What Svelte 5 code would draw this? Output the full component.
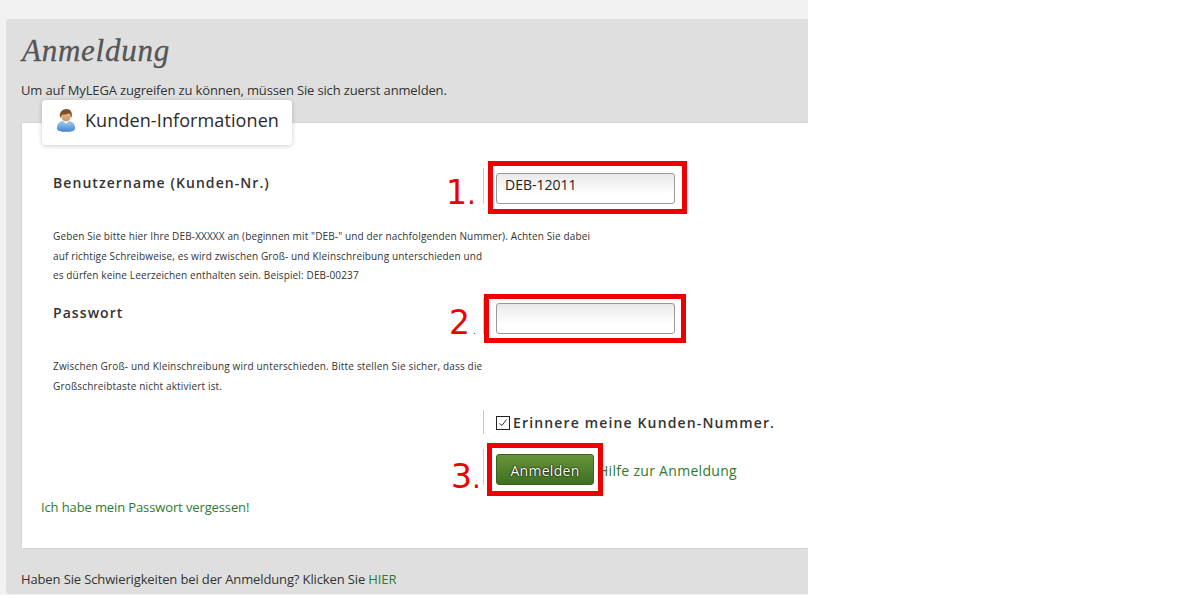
<script>
  // Overlay marks drawn on the screenshot: red frames and step numbers
  const marks = [
    { n: '1', dot: '.', cls: 'one' },
    { n: '2', dot: '.', cls: 'two' },
    { n: '3', dot: '.', cls: 'three' },
  ];
</script>

<div class="page">
  <section class="panel">
    <h1>Anmeldung</h1>
    <p class="intro">Um auf MyLEGA zugreifen zu können, müssen Sie sich zuerst anmelden.</p>

    <div class="card">
      <div class="legend">
        <svg width="20" height="24" viewBox="0 0 22 26">
          <defs>
            <linearGradient id="shirt" x1="0" y1="0" x2="0" y2="1">
              <stop offset="0" stop-color="#a9d0f2" />
              <stop offset="1" stop-color="#3f86cf" />
            </linearGradient>
            <linearGradient id="skin" x1="0" y1="0" x2="0" y2="1">
              <stop offset="0" stop-color="#eec39a" />
              <stop offset="1" stop-color="#cf9565" />
            </linearGradient>
          </defs>
          <path d="M1 22c0-5 3-7.500 7-8.500h6c4 1 7 3.500 7 8.500 0 2.500-3 4-10 4S1 24.500 1 22z" fill="url(#shirt)" />
          <path d="M7.500 14l3.500 3.500 3.500-3.500-1-2.500h-5z" fill="#f2f6fa" />
          <ellipse cx="11" cy="8" rx="5.500" ry="6.500" fill="url(#skin)" />
          <path d="M4.500 11C3 4 7.500 1 11.500 1 16 1 18.500 4.500 17 11c-.5-3-1.500-5-3-5.500C12 7 8 7 7 7 6 8 5 9.500 4.500 11z" fill="#7d4f26" />
        </svg>
        <span>Kunden-Informationen</span>
      </div>

      <div class="row first">
        <label for="user">Benutzername (Kunden-Nr.)</label>
        <div class="field"><input id="user" type="text" value="DEB-12011" /></div>
      </div>
      <p class="help first-help">
        Geben Sie bitte hier Ihre DEB-XXXXX an (beginnen mit "DEB-" und der nachfolgenden Nummer). Achten Sie dabei<br />
        auf richtige Schreibweise, es wird zwischen Groß- und Kleinschreibung unterschieden und<br />
        es dürfen keine Leerzeichen enthalten sein. Beispiel: DEB-00237
      </p>

      <div class="row">
        <label for="pass">Passwort</label>
        <div class="field"><input id="pass" type="password" /></div>
      </div>
      <p class="help second-help">
        Zwischen Groß- und Kleinschreibung wird unterschieden. Bitte stellen Sie sicher, dass die<br />
        Großschreibtaste nicht aktiviert ist.
      </p>

      <div class="row check-row">
        <div class="field check">
          <span class="box">
            <svg width="14" height="14" viewBox="0 0 14 14">
              <rect x=".5" y=".5" width="13" height="13" fill="#fff" stroke="#222" />
              <path d="M3.500 7.500 6 9.500 10.500 3.500" fill="none" stroke="#333" stroke-width="1" />
            </svg>
          </span>
          <span class="remember">Erinnere meine Kunden-Nummer.</span>
        </div>
      </div>

      <div class="row submit-row">
        <div class="field submit">
          <button type="button">Anmelden</button>
          <a href="#hilfe" class="help-link">Hilfe zur Anmeldung</a>
        </div>
      </div>

      <a href="#vergessen" class="forgot">Ich habe mein Passwort vergessen!</a>

      {#each marks as m}
        <span class="num {m.cls}">{m.n}<span class="dot">{m.dot}</span></span>
        <span class="frame {m.cls}"></span>
      {/each}
    </div>

    <p class="trouble">Haben Sie Schwierigkeiten bei der Anmeldung? Klicken Sie <a href="#hier">HIER</a></p>
  </section>
</div>

<style>
  :global(body) {
    margin: 0;
    background: #fff;
  }
  .page {
    width: 802px;
    height: 576px;
    padding: 19px 0 0 6px;
    background: #f2f2f2;
    overflow: hidden;
    font-family: "Open Sans", sans-serif;
    color: #333;
  }
  .panel {
    height: 575px;
    background: #dfdfdf;
    border-radius: 4px 0 0 4px;
    overflow: hidden;
  }
  h1 {
    margin: 0;
    padding: 12px 0 0 16px;
    font-family: "Liberation Serif", serif;
    font-style: italic;
    font-weight: 400;
    font-size: 31px;
    line-height: 40px;
    letter-spacing: 0.75px;
    color: #555;
    -webkit-text-stroke: 0.3px #555;
  }
  .intro {
    margin: 10px 0 0 15px;
    font-size: 13px;
    line-height: 18px;
    letter-spacing: -0.15px;
  }
  .card {
    position: relative;
    height: 425px;
    margin: 24px 0 0 16px;
    background: #fff;
    box-shadow: 0 0 2px rgba(0, 0, 0, 0.12);
  }
  .legend {
    position: absolute;
    left: 20px;
    top: -23px;
    width: 250px;
    height: 45px;
    box-sizing: border-box;
    padding: 0 0 6px 14px;
    display: flex;
    align-items: center;
    gap: 9px;
    background: #fff;
    border-radius: 4px;
    box-shadow: 0 1px 5px rgba(0, 0, 0, 0.2);
    font-size: 18px;
    letter-spacing: 0.1px;
    color: #2b2b2b;
  }
  .row {
    display: flex;
    padding-left: 31px;
  }
  .row.first {
    padding-top: 45px;
  }
  .row label {
    width: 430px;
    font-size: 14px;
    font-weight: 600;
    line-height: 32px;
    letter-spacing: 1.07px;
    color: #333;
    margin-top: -1px;
    height: 32px;
  }
  .field {
    border-left: 1px solid #ccc;
    padding: 5px 0 0 12px;
    height: 31px;
  }
  input {
    display: block;
    box-sizing: border-box;
    width: 179px;
    height: 31px;
    margin: 0;
    padding: 0 8px 8px;
    border: 1px solid #999;
    border-radius: 3px;
    background: linear-gradient(#e9e9e9, #fff 70%);
    font-family: "Open Sans", sans-serif;
    font-size: 14px;
    color: #222;
  }
  .help {
    margin: 0;
    padding-left: 31px;
    font-size: 10px;
    line-height: 19.5px;
    letter-spacing: 0.13px;
    color: #333;
    white-space: nowrap;
  }
  .first-help {
    margin-top: 23px;
    margin-bottom: 12.5px;
  }
  .row + .second-help {
    margin-top: 23px;
    letter-spacing: 0.17px;
  }
  .check-row {
    margin-top: 14px;
    padding-left: 461px;
  }
  .check {
    display: flex;
    align-items: center;
    height: 24px;
    padding: 0 0 0 12px;
  }
  .box {
    display: block;
    height: 14px;
    margin: 0 3px 5px 0;
  }
  .remember {
    font-size: 14px;
    font-weight: 600;
    letter-spacing: 1.15px;
    white-space: nowrap;
  }
  .submit-row {
    margin-top: 15px;
    padding-left: 461px;
  }
  .submit {
    display: flex;
    align-items: flex-start;
  }
  button {
    width: 98px;
    height: 31px;
    padding: 2px 0 0;
    border: 1px solid #3c5f25;
    border-radius: 3px;
    background: linear-gradient(#669437, #3f7022);
    color: #fff;
    font-family: "Open Sans", sans-serif;
    font-size: 14px;
    letter-spacing: 0.3px;
    text-shadow: 0 0 2px #000, 0 0 1px #000;
  }
  .help-link {
    margin-left: 4px;
    line-height: 33px;
    font-size: 14px;
    letter-spacing: 0.3px;
    white-space: nowrap;
  }
  a {
    color: #2f7a2f;
    text-decoration: none;
  }
  .forgot {
    display: block;
    margin: 13px 0 0 19px;
    font-size: 13px;
    line-height: 18px;
    letter-spacing: -0.12px;
  }
  .trouble {
    margin: 22px 0 0 15px;
    font-size: 13px;
    line-height: 18px;
    letter-spacing: -0.13px;
  }
  .frame {
    position: absolute;
    box-sizing: border-box;
    border: 5px solid #ee0000;
  }
  .frame.one {
    left: 466px;
    top: 38px;
    width: 199px;
    height: 53px;
  }
  .frame.two {
    left: 462px;
    top: 171px;
    width: 202px;
    height: 49px;
  }
  .frame.three {
    left: 465px;
    top: 320px;
    width: 116px;
    height: 53px;
  }
  .num {
    position: absolute;
    font-family: "DejaVu Sans", sans-serif;
    font-size: 33px;
    line-height: 40px;
    color: #ee0000;
    white-space: nowrap;
  }
  .num .dot {
    font-size: 28px;
  }
  .num.two .dot {
    font-size: 9px;
    margin-left: 3px;
  }
  .num.one {
    left: 424px;
    top: 50px;
  }
  .num.two {
    left: 427px;
    top: 180px;
  }
  .num.three {
    left: 429px;
    top: 334px;
  }
</style>
